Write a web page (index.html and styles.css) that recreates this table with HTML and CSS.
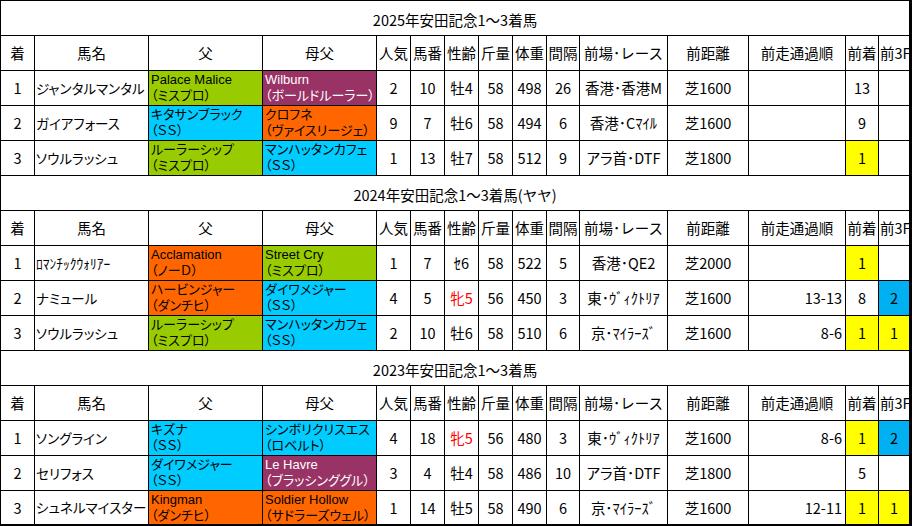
FILE: index.html
```html
<!DOCTYPE html>
<html lang="ja">
<head>
<meta charset="utf-8">
<title>安田記念1～3着馬</title>
<link rel="stylesheet" href="styles.css">
</head>
<body>
<div class="sheet">
  <div class="title">2025年安田記念1～3着馬</div>
  <div class="c h">着</div><div class="c h">馬名</div><div class="c h">父</div><div class="c h">母父</div><div class="c h">人気</div><div class="c h">馬番</div><div class="c h">性齢</div><div class="c h">斤量</div><div class="c h">体重</div><div class="c h">間隔</div><div class="c h">前場･レース</div><div class="c h">前距離</div><div class="c h">前走通過順</div><div class="c h">前着</div><div class="c h cut">前3F</div>

  <div class="c">1</div><div class="c l">ジャンタルマンタル</div>
  <div class="c s g"><span>Palace Malice</span><span>（ミスプロ）</span></div>
  <div class="c s p"><span>Wilburn</span><span>（ボールドルーラー）</span></div>
  <div class="c">2</div><div class="c">10</div><div class="c">牡4</div><div class="c">58</div><div class="c">498</div><div class="c">26</div><div class="c">香港･香港M</div><div class="c">芝1600</div><div class="c r"></div><div class="c">13</div><div class="c"></div>

  <div class="c">2</div><div class="c l">ガイアフォース</div>
  <div class="c s b"><span>キタサンブラック</span><span>（ＳＳ）</span></div>
  <div class="c s o"><span>クロフネ</span><span>（ヴァイスリージェ）</span></div>
  <div class="c">9</div><div class="c">7</div><div class="c">牡6</div><div class="c">58</div><div class="c">494</div><div class="c">6</div><div class="c">香港･Cﾏｲﾙ</div><div class="c">芝1600</div><div class="c r"></div><div class="c">9</div><div class="c"></div>

  <div class="c">3</div><div class="c l">ソウルラッシュ</div>
  <div class="c s g"><span>ルーラーシップ</span><span>（ミスプロ）</span></div>
  <div class="c s b"><span>マンハッタンカフェ</span><span>（ＳＳ）</span></div>
  <div class="c">1</div><div class="c">13</div><div class="c">牡7</div><div class="c">58</div><div class="c">512</div><div class="c">9</div><div class="c">アラ首･DTF</div><div class="c">芝1800</div><div class="c r"></div><div class="c y">1</div><div class="c"></div>

  <div class="title">2024年安田記念1～3着馬(ヤヤ)</div>
  <div class="c h">着</div><div class="c h">馬名</div><div class="c h">父</div><div class="c h">母父</div><div class="c h">人気</div><div class="c h">馬番</div><div class="c h">性齢</div><div class="c h">斤量</div><div class="c h">体重</div><div class="c h">間隔</div><div class="c h">前場･レース</div><div class="c h">前距離</div><div class="c h">前走通過順</div><div class="c h">前着</div><div class="c h cut">前3F</div>

  <div class="c">1</div><div class="c l">ﾛﾏﾝﾁｯｸｳｫﾘｱｰ</div>
  <div class="c s o"><span>Acclamation</span><span>（ノーＤ）</span></div>
  <div class="c s g"><span>Street Cry</span><span>（ミスプロ）</span></div>
  <div class="c">1</div><div class="c">7</div><div class="c">ｾ6</div><div class="c">58</div><div class="c">522</div><div class="c">5</div><div class="c">香港･QE2</div><div class="c">芝2000</div><div class="c r"></div><div class="c y">1</div><div class="c"></div>

  <div class="c">2</div><div class="c l">ナミュール</div>
  <div class="c s o"><span>ハービンジャー</span><span>（ダンチヒ）</span></div>
  <div class="c s b"><span>ダイワメジャー</span><span>（ＳＳ）</span></div>
  <div class="c">4</div><div class="c">5</div><div class="c red">牝5</div><div class="c">56</div><div class="c">450</div><div class="c">3</div><div class="c">東･ｳﾞｨｸﾄﾘｱ</div><div class="c">芝1600</div><div class="c r">13-13</div><div class="c">8</div><div class="c bl">2</div>

  <div class="c">3</div><div class="c l">ソウルラッシュ</div>
  <div class="c s g"><span>ルーラーシップ</span><span>（ミスプロ）</span></div>
  <div class="c s b"><span>マンハッタンカフェ</span><span>（ＳＳ）</span></div>
  <div class="c">2</div><div class="c">10</div><div class="c">牡6</div><div class="c">58</div><div class="c">510</div><div class="c">6</div><div class="c">京･ﾏｲﾗｰｽﾞ</div><div class="c">芝1600</div><div class="c r">8-6</div><div class="c y">1</div><div class="c y">1</div>

  <div class="title">2023年安田記念1～3着馬</div>
  <div class="c h">着</div><div class="c h">馬名</div><div class="c h">父</div><div class="c h">母父</div><div class="c h">人気</div><div class="c h">馬番</div><div class="c h">性齢</div><div class="c h">斤量</div><div class="c h">体重</div><div class="c h">間隔</div><div class="c h">前場･レース</div><div class="c h">前距離</div><div class="c h">前走通過順</div><div class="c h">前着</div><div class="c h cut">前3F</div>

  <div class="c">1</div><div class="c l">ソングライン</div>
  <div class="c s b"><span>キズナ</span><span>（ＳＳ）</span></div>
  <div class="c s b"><span>シンボリクリスエス</span><span>（ロベルト）</span></div>
  <div class="c">4</div><div class="c">18</div><div class="c red">牝5</div><div class="c">56</div><div class="c">480</div><div class="c">3</div><div class="c">東･ｳﾞｨｸﾄﾘｱ</div><div class="c">芝1600</div><div class="c r">8-6</div><div class="c y">1</div><div class="c bl">2</div>

  <div class="c">2</div><div class="c l">セリフォス</div>
  <div class="c s b"><span>ダイワメジャー</span><span>（ＳＳ）</span></div>
  <div class="c s p"><span>Le Havre</span><span>（ブラッシンググル）</span></div>
  <div class="c">3</div><div class="c">4</div><div class="c">牡4</div><div class="c">58</div><div class="c">486</div><div class="c">10</div><div class="c">アラ首･DTF</div><div class="c">芝1800</div><div class="c r"></div><div class="c">5</div><div class="c"></div>

  <div class="c">3</div><div class="c l">シュネルマイスター</div>
  <div class="c s o"><span>Kingman</span><span>（ダンチヒ）</span></div>
  <div class="c s o"><span>Soldier Hollow</span><span>（サドラーズウェル）</span></div>
  <div class="c">1</div><div class="c">14</div><div class="c">牡5</div><div class="c">58</div><div class="c">490</div><div class="c">6</div><div class="c">京･ﾏｲﾗｰｽﾞ</div><div class="c">芝1600</div><div class="c r">12-11</div><div class="c y">1</div><div class="c y">1</div>
</div>
</body>
</html>
```

FILE: styles.css
```css
html, body {
  margin: 0;
  padding: 0;
  background: #ffffff;
}

body {
  font-family: "Noto Sans CJK JP", "Liberation Sans", sans-serif;
  font-size: 14.5px;
  color: #000000;
  overflow: hidden;
}

.sheet {
  width: 912px;
  height: 526px;
  box-sizing: border-box;
  display: grid;
  grid-template-columns: 33px 113px 113px 113px 33px 33px 33px 33px 33px 32px 87px 80px 96px 32px 30px;
  grid-template-rows: repeat(14, 34px) 33px;
  gap: 1px;
  padding: 1px 3px 2px 1px;
  background: #000000;
}

.title {
  grid-column: 1 / -1;
  background: #ffffff;
  display: flex;
  align-items: center;
  justify-content: center;
  padding-top: 2px;
  font-size: 14.5px;
  white-space: nowrap;
}

.c {
  background: #ffffff;
  display: flex;
  align-items: center;
  justify-content: center;
  white-space: nowrap;
  overflow: hidden;
  line-height: 1;
  padding-top: 1px;
  box-sizing: border-box;
  font-feature-settings: "palt";
}

.h {
  font-feature-settings: normal;
}

.cut {
  justify-content: flex-start;
  padding-left: 1px;
}

.l {
  justify-content: flex-start;
  padding-left: 1px;
  font-size: 13.5px;
}

.r {
  justify-content: flex-end;
  padding-right: 3px;
}

.s {
  flex-direction: column;
  align-items: flex-start;
  justify-content: center;
  padding: 0 0 0 2px;
  font-family: "Liberation Sans", "Noto Sans CJK JP", sans-serif;
  font-size: 13px;
  line-height: 16px;
}

.s span {
  display: block;
  height: 16px;
}

.g { background: #99cc00; }
.b { background: #00ccff; }
.o { background: #ff6600; }
.p { background: #993366; color: #ffffff; }
.y { background: #ffff00; }
.bl { background: #00b0f0; }
.red { color: #ff0000; }
```
